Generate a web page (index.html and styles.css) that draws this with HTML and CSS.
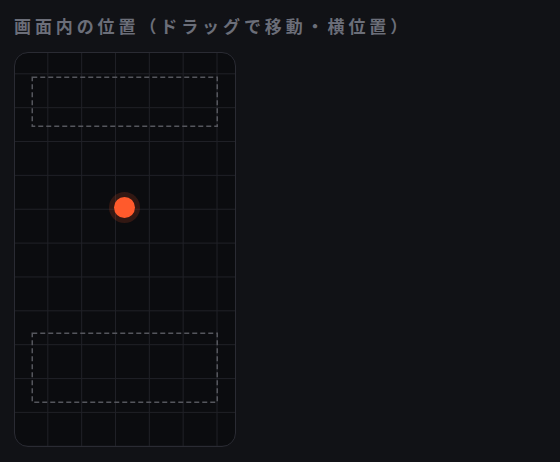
FILE: index.html
```html
<!DOCTYPE html>
<html lang="ja">
<head>
<meta charset="utf-8">
<title>位置設定</title>
<link rel="stylesheet" href="styles.css">
</head>
<body>
  <section class="panel">
    <h2 class="panel-title">画面内の位置（ドラッグで移動・横位置）</h2>
    <div class="screen">
      <svg class="safe-zones" width="219" height="392" viewBox="0 0 219 392" aria-hidden="true">
        <rect x="17.25" y="24.25" width="185" height="49" />
        <rect x="17.25" y="280.25" width="185" height="69" />
      </svg>
      <div class="marker" style="left: 99px; top: 144px;"></div>
    </div>
  </section>
</body>
</html>
```
FILE: styles.css
```css
html, body {
  margin: 0;
  padding: 0;
  background: #111216;
}

body {
  width: 560px;
  height: 462px;
  overflow: hidden;
  font-family: "Noto Sans CJK JP", "Noto Sans", sans-serif;
}

.panel {
  padding: 15px 14px;
  display: flex;
  flex-direction: column;
}

.panel-title {
  margin: 0;
  font-size: 17px;
  line-height: 21px;
  font-weight: 700;
  letter-spacing: 3.9px;
  color: #6b6e79;
  white-space: nowrap;
}

.screen {
  position: relative;
  margin-top: 16px;
  width: 222px;
  height: 395px;
  box-sizing: border-box;
  border: 1.5px solid #2a2b33;
  border-radius: 14px;
  overflow: hidden;
  background-color: #0b0c0f;
  background-image:
    linear-gradient(to right, #1f2026 1px, transparent 1px),
    linear-gradient(to bottom, #1f2026 1px, transparent 1px);
  background-size: 33.85px 33.87px;
  background-position: 32.3px 20.3px;
}

.safe-zones {
  position: absolute;
  left: 0;
  top: 0;
}

.safe-zones rect {
  fill: none;
  stroke: #55565d;
  stroke-width: 1.5;
  stroke-dasharray: 5 3;
}

.marker {
  position: absolute;
  width: 21px;
  height: 21px;
  border-radius: 50%;
  background: #ff5a2c;
  box-shadow: 0 0 0 5px rgba(255, 90, 44, 0.16);
}
```
